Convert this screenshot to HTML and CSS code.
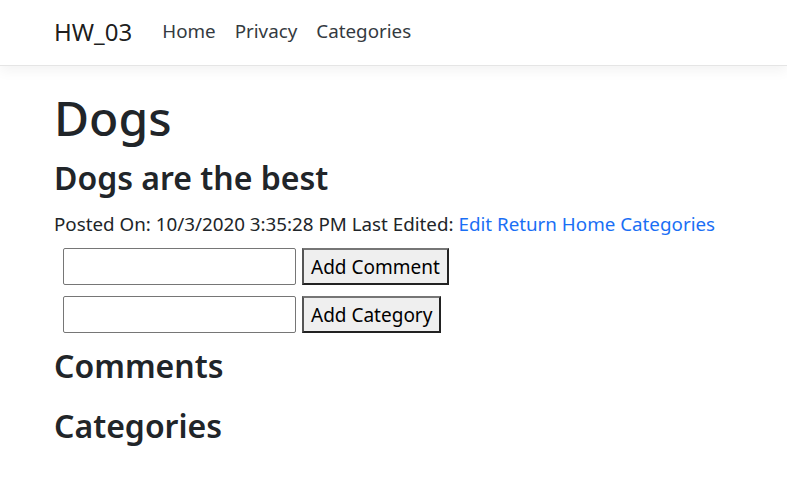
FILE: index.html
```html
<!DOCTYPE html>
<html lang="en">
<head>
<meta charset="utf-8">
<title>Dogs - HW_03</title>
<link rel="stylesheet" href="styles.css">
</head>
<body>
<header class="navbar">
  <div class="nav-inner">
    <a class="brand" href="#">HW_03</a>
    <nav class="nav-links">
      <a class="nav-link" href="#">Home</a>
      <a class="nav-link" href="#">Privacy</a>
      <a class="nav-link" href="#">Categories</a>
    </nav>
  </div>
</header>
<main class="content">
  <h1 class="title">Dogs</h1>
  <h3 class="subtitle">Dogs are the best</h3>
  <p class="meta">Posted On: 10/3/2020 3:35:28 PM Last Edited: <a href="#">Edit</a> <a href="#">Return Home</a> <a href="#">Categories</a></p>
  <form class="add-form">
    <input class="field" type="text">
    <button class="btn" type="button">Add Comment</button>
  </form>
  <form class="add-form">
    <input class="field" type="text">
    <button class="btn" type="button">Add Category</button>
  </form>
  <h3 class="section">Comments</h3>
  <h3 class="section">Categories</h3>
</main>
</body>
</html>
```

FILE: styles.css
```css
* { box-sizing: border-box; }
html, body { margin: 0; padding: 0; background: #fff; }
body {
  font-family: "Noto Sans", "Open Sans", sans-serif;
  color: #212529;
  font-size: 20px;
}
a { text-decoration: none; }
.navbar {
  height: 66px;
  border-bottom: 1px solid #e5e5e5;
  box-shadow: 0 5px 12px rgba(0,0,0,.05);
  background: #fff;
}
.nav-inner {
  display: flex;
  align-items: center;
  height: 62px;
  padding-left: 54px;
}
.brand {
  font-size: 24px;
  color: rgba(0,0,0,.9);
  margin-right: 30px;
  line-height: 30px;
  position: relative;
  top: 1px;
}
.nav-links { display: flex; gap: 19px; }
.nav-link {
  font-size: 18.8px;
  color: #343a40;
  line-height: 28px;
}
.content { padding: 22px 0 0 54px; }
.title {
  margin: 0;
  font-size: 48px;
  font-weight: 500;
  line-height: 60px;
}
.subtitle {
  margin: 11px 0 0;
  font-size: 32px;
  font-weight: 600;
  line-height: 38px;
}
.meta {
  margin: 12px 0 0;
  font-size: 18.8px;
  line-height: 30px;
}
.meta a { color: #1a6ff5; }
.add-form {
  display: flex;
  gap: 6px;
  margin: 9px 0 0 9px;
}
.add-form + .add-form { margin-top: 11px; }
.field {
  width: 233px;
  height: 37px;
  border: 1px solid #767676;
  border-radius: 2px;
  background: #fff;
  font: inherit;
}
.btn {
  height: 37px;
  padding: 0 7px;
  font-family: inherit;
  font-size: 19px;
  color: #000;
  background: #efefef;
  border-style: solid;
  border-width: 2px;
  border-color: #767676 #222 #222 #555;
}
.section {
  margin: 12px 0 0;
  font-size: 32px;
  font-weight: 600;
  line-height: 42px;
}
.section + .section { margin-top: 18px; }
```
